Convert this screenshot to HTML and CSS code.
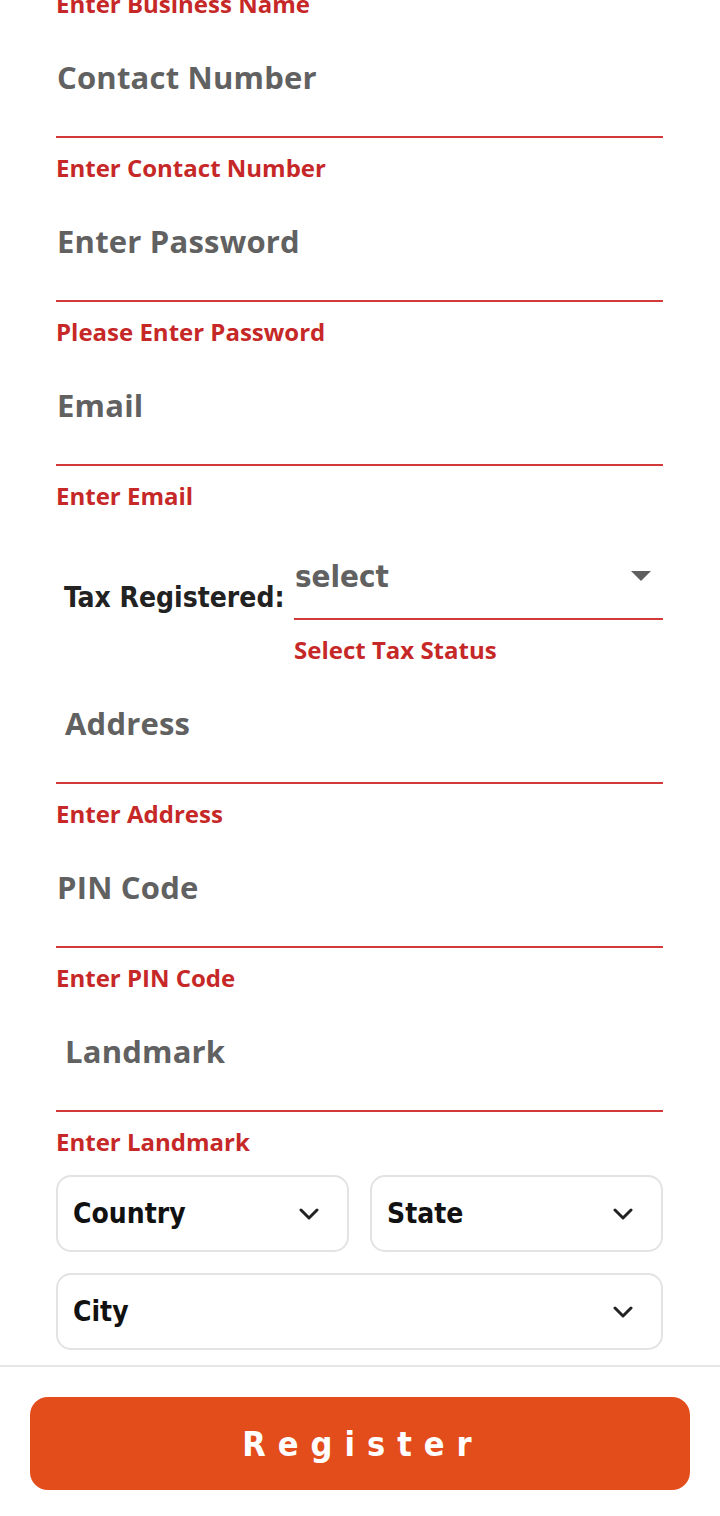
FILE: index.html
```html
<!DOCTYPE html>
<html>
<head>
<meta charset="utf-8">
<link rel="stylesheet" href="styles.css">
</head>
<body>
<div class="screen">
  <form class="form">
    <div class="error first">Enter Business Name</div>

    <div class="field"><span class="placeholder">Contact Number</span></div>
    <div class="error">Enter Contact Number</div>

    <div class="field"><span class="placeholder">Enter Password</span></div>
    <div class="error">Please Enter Password</div>

    <div class="field"><span class="placeholder">Email</span></div>
    <div class="error">Enter Email</div>

    <div class="tax-row">
      <div class="tax-label">Tax Registered:</div>
      <div class="tax-col">
        <div class="tax-select">
          <span class="tax-value">select</span>
          <svg class="tri" width="20" height="10" viewBox="0 0 20 10"><path d="M0 0 H20 L10 10 Z" fill="#5f5f5f"/></svg>
        </div>
        <div class="error">Select Tax Status</div>
      </div>
    </div>

    <div class="field indent"><span class="placeholder">Address</span></div>
    <div class="error">Enter Address</div>

    <div class="field"><span class="placeholder">PIN Code</span></div>
    <div class="error">Enter PIN Code</div>

    <div class="field indent"><span class="placeholder">Landmark</span></div>
    <div class="error">Enter Landmark</div>

    <div class="drop-row">
      <div class="drop"><span>Country</span><svg class="chev" width="20" height="12" viewBox="0 0 20 12"><path d="M2 2 L10 10 L18 2" fill="none" stroke="#222" stroke-width="3" stroke-linecap="round" stroke-linejoin="round"/></svg></div>
      <div class="drop"><span>State</span><svg class="chev" width="20" height="12" viewBox="0 0 20 12"><path d="M2 2 L10 10 L18 2" fill="none" stroke="#222" stroke-width="3" stroke-linecap="round" stroke-linejoin="round"/></svg></div>
    </div>
    <div class="drop-row">
      <div class="drop"><span>City</span><svg class="chev" width="20" height="12" viewBox="0 0 20 12"><path d="M2 2 L10 10 L18 2" fill="none" stroke="#222" stroke-width="3" stroke-linecap="round" stroke-linejoin="round"/></svg></div>
    </div>
  </form>

  <footer class="footer">
    <button class="register" type="button">Register</button>
  </footer>
</div>
</body>
</html>
```

FILE: styles.css
```css
* { box-sizing: border-box; }
html, body {
  margin: 0;
  padding: 0;
  background: #fff;
  width: 720px;
  height: 1516px;
  overflow: hidden;
}
.screen {
  display: flex;
  flex-direction: column;
  height: 1516px;
}
.form {
  display: flex;
  flex-direction: column;
  padding: 0 57px 0 56px;
  flex: 1;
}
.error {
  font-family: "Open Sans", sans-serif;
  font-weight: 700;
  font-size: 24px;
  color: #c62828;
  line-height: 32px;
  padding-top: 14px;
  height: 46px;
  white-space: nowrap;
}
.error.first {
  margin-top: -26px;
}
.field {
  height: 118px;
  border-bottom: 2px solid #d23a3a;
  display: flex;
  align-items: center;
  padding-left: 1px;
}
.field.indent { padding-left: 9px; }
.placeholder {
  font-family: "Open Sans", sans-serif;
  font-weight: 700;
  font-size: 31px;
  color: #616161;
  letter-spacing: 0.2px;
  margin-top: -2px;
}
.tax-row {
  display: flex;
  align-items: flex-start;
  margin-top: 36px;
}
.tax-label {
  font-family: "DejaVu Sans Condensed", "DejaVu Sans", sans-serif;
  font-weight: 700;
  font-size: 28px;
  color: #222;
  line-height: 40px;
  margin-top: 30px;
  padding-left: 8px;
  width: 238px;
  white-space: nowrap;
}
.tax-col {
  flex: 1;
  display: flex;
  flex-direction: column;
}
.tax-select {
  height: 72px;
  border-bottom: 2px solid #d23a3a;
  display: flex;
  align-items: flex-start;
  justify-content: space-between;
  padding-right: 12px;
}
.tax-value {
  font-family: "DejaVu Sans Condensed", "DejaVu Sans", sans-serif;
  font-weight: 700;
  font-size: 31px;
  color: #616161;
  line-height: 56px;
  padding-left: 1px;
}
.tri { margin-top: 23px; }
.drop-row {
  display: flex;
  gap: 21px;
  margin-top: 17px;
}
.drop-row + .drop-row { margin-top: 21px; }
.drop {
  flex: 1;
  height: 77px;
  border: 2px solid #e3e3e3;
  border-radius: 15px;
  display: flex;
  align-items: center;
  justify-content: space-between;
  padding: 0 28px 0 15px;
}
.drop span {
  font-family: "DejaVu Sans Condensed", "DejaVu Sans", sans-serif;
  font-weight: 700;
  font-size: 28px;
  color: #111;
}
.footer {
  border-top: 2px solid #e6e6e6;
  padding: 30px 30px 26px;
}
.register {
  display: block;
  width: 100%;
  height: 93px;
  border: none;
  border-radius: 18px;
  background: #e34c1b;
  color: #fff;
  font-family: "DejaVu Sans Condensed", "DejaVu Sans", sans-serif;
  font-weight: 700;
  font-size: 34px;
  letter-spacing: 12px;
  padding-left: 12px;
}
```
